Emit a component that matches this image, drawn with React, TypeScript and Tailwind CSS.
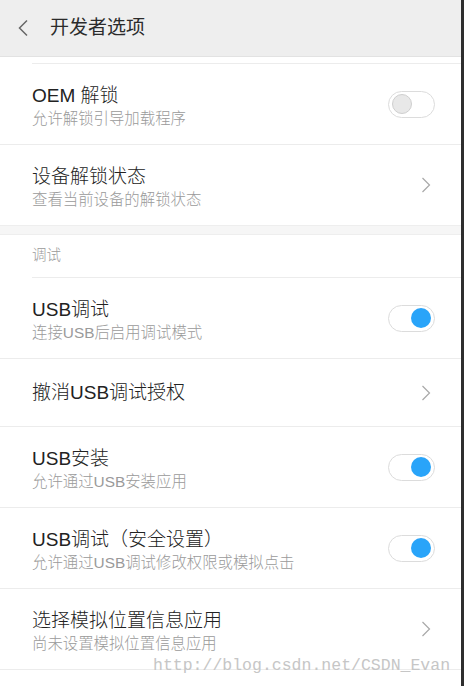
import React from "react";

const font = { fontFamily: '"Liberation Sans", "Noto Sans CJK SC", sans-serif' };

function Toggle({ on }: { on: boolean }) {
  return (
    <div className="w-[47px] h-[27px] rounded-full border border-[#dcdcdc] bg-white flex items-center px-[3px]">
      {on ? (
        <div className="ml-auto w-[20px] h-[20px] rounded-full bg-[#29a4f9]" />
      ) : (
        <div className="w-[20px] h-[20px] rounded-full bg-[#e8e8e8] border border-[#cfcfcf]" />
      )}
    </div>
  );
}

function Chevron() {
  return (
    <svg width="10" height="16" viewBox="0 0 10 16" className="mr-[30px]">
      <path d="M1.5 1 L8.5 8 L1.5 15" fill="none" stroke="#a8a8a8" strokeWidth="1.2" />
    </svg>
  );
}

function Row({
  title,
  sub,
  right,
  h = 80,
  border = true,
}: {
  title: string;
  sub?: string;
  right?: React.ReactNode;
  h?: number;
  border?: boolean;
}) {
  return (
    <div
      className={`flex items-center pl-[32px] ${border ? "border-b border-[#ececec]" : ""} ${h === 80 ? (border ? "h-[81px]" : "h-[80px]") : "h-[68px]"}`}
    >
      <div className={`flex-1 flex flex-col ${sub ? "pt-[4px]" : "pt-[1px]"}`}>
        <div className="text-[19px] leading-[24px] text-[#222] font-light">{title}</div>
        {sub && <div className="text-[15.4px] leading-[20px] text-[#9a9a9a] mt-[1px] font-light">{sub}</div>}
      </div>
      {right}
    </div>
  );
}

export default function App() {
  return (
    <div className="w-[464px] h-[686px] flex overflow-hidden bg-white" style={font}>
      <div className="w-[461px] h-full flex flex-col relative">
        <div className="h-[57px] bg-[#eeeeee] border-b border-[#e2e2e2] flex items-center shrink-0">
          <svg width="12" height="18" viewBox="0 0 12 18" className="ml-[17px]">
            <path d="M10 1.5 L2.5 9 L10 16.5" fill="none" stroke="#666" strokeWidth="1.5" />
          </svg>
          <div className="ml-[21px] text-[19px] text-[#2b2b2b]">开发者选项</div>
        </div>
        <div className="h-[7px] ml-[32px] border-b border-[#ececec] shrink-0" />
        <div className="flex flex-col">
          <Row title="OEM 解锁" sub="允许解锁引导加载程序" right={<div className="mr-[26px]"><Toggle on={false} /></div>} />
          <Row title="设备解锁状态" sub="查看当前设备的解锁状态" border={false} right={<Chevron />} />
        </div>
        <div className="h-[10px] bg-[#f6f6f6] border-y border-[#eeeeee] shrink-0" />
        <div className="h-[42px] flex items-center pl-[32px] shrink-0">
          <div className="text-[14.5px] text-[#9a9a9a] font-light">调试</div>
        </div>
        <div className="ml-[32px] border-t border-[#ececec]">
          <div className="-ml-[32px]">
            <Row title="USB调试" sub="连接USB后启用调试模式" right={<div className="mr-[26px]"><Toggle on /></div>} />
            <Row title="撤消USB调试授权" h={68} right={<Chevron />} />
            <Row title="USB安装" sub="允许通过USB安装应用" right={<div className="mr-[26px]"><Toggle on /></div>} />
            <Row title="USB调试（安全设置）" sub="允许通过USB调试修改权限或模拟点击" right={<div className="mr-[26px]"><Toggle on /></div>} />
            <Row title="选择模拟位置信息应用" sub="尚未设置模拟位置信息应用" right={<Chevron />} />
          </div>
        </div>
        <div
          className="absolute left-[153px] top-[655px] text-[16.5px] leading-[22px] text-[#c6c6c6] whitespace-nowrap"
          style={{ fontFamily: '"Liberation Mono", monospace' }}
        >
          http://blog.csdn.net/CSDN_Evan
        </div>
      </div>
      <div className="w-[3px] h-full bg-[#2e2e2e]" />
    </div>
  );
}
